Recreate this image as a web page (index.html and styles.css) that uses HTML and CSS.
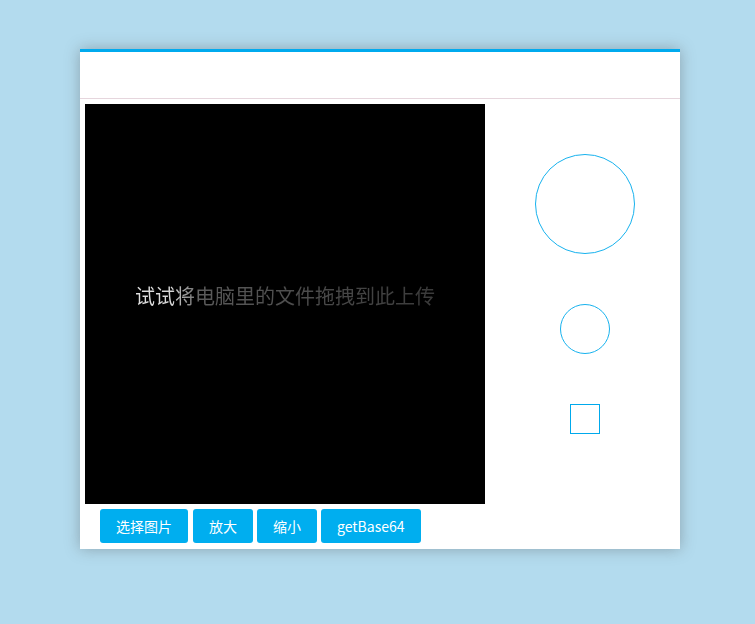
FILE: index.html
```html
<!DOCTYPE html>
<html lang="zh">
<head>
<meta charset="utf-8">
<title>Cropper</title>
<link rel="stylesheet" href="styles.css">
</head>
<body>
<div class="card">
  <div class="card-header"></div>
  <div class="card-body">
    <div class="stage">
      <span class="drop-hint">试试将电脑里的文件拖拽到此上传</span>
    </div>
    <div class="previews">
      <div class="preview preview-lg"></div>
      <div class="preview preview-md"></div>
      <div class="preview preview-sm"></div>
    </div>
  </div>
  <div class="toolbar">
    <button class="btn">选择图片</button>
    <button class="btn">放大</button>
    <button class="btn">缩小</button>
    <button class="btn">getBase64</button>
  </div>
</div>
</body>
</html>
```
FILE: styles.css
```css
html, body {
  margin: 0;
  padding: 0;
}
body {
  background: #b3dbee;
  width: 755px;
  height: 624px;
  overflow: hidden;
  font-family: "Noto Sans CJK SC", "Noto Sans", sans-serif;
}
.card {
  margin: 49px 0 0 80px;
  width: 600px;
  height: 500px;
  box-sizing: border-box;
  background: #fff;
  border-top: 3px solid #00aaee;
  box-shadow: 0 0 14px rgba(80, 80, 80, 0.4);
}
.card-header {
  height: 46px;
  border-bottom: 1px solid #e6d6dd;
}
.card-body {
  display: flex;
  padding: 5px 0 0 5px;
}
.stage {
  flex: 0 0 400px;
  width: 400px;
  height: 400px;
  background: #000;
  display: flex;
  align-items: center;
  justify-content: center;
}
.drop-hint {
  font-size: 20px;
  line-height: 24px;
  margin-top: -16px;
  background: linear-gradient(to right, #e0e0e0 0%, #d8d8d8 12%, #5a5a5a 22%, #4a4a4a 60%, #3a3a3a 100%);
  -webkit-background-clip: text;
  background-clip: text;
  color: transparent;
}
.previews {
  flex: 0 0 200px;
  width: 200px;
  display: flex;
  flex-direction: column;
  align-items: center;
}
.preview {
  box-sizing: border-box;
  border: 1px solid #17b2ee;
  margin-top: 50px;
}
.preview-lg {
  width: 100px;
  height: 100px;
  border-radius: 50%;
}
.preview-md {
  width: 50px;
  height: 50px;
  border-radius: 50%;
}
.preview-sm {
  width: 30px;
  height: 30px;
  border-color: #00a9ec;
}
.toolbar {
  display: flex;
  gap: 4px;
  padding: 5px 0 0 20px;
}
.btn {
  height: 34px;
  padding: 0 16px;
  border: none;
  border-radius: 3px;
  background: #00aeef;
  color: #fff;
  font-family: "Noto Sans CJK SC", "Noto Sans", sans-serif;
  font-size: 14px;
  line-height: 34px;
  cursor: pointer;
}
.btn:first-child {
  margin-right: 1px;
}
```
